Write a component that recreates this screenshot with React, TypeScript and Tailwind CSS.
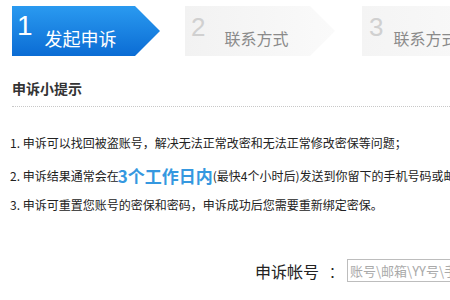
const font = "font-['Noto_Sans_CJK_SC',sans-serif]";
const num = "font-['Liberation_Sans',Arial,sans-serif]";

type Step = { n: string; label: string };

const steps: Step[] = [
  { n: "1", label: "发起申诉" },
  { n: "2", label: "联系方式" },
  { n: "3", label: "联系方式" },
];

const App = () => {
  return (
    <div className={`w-[450px] h-[300px] overflow-hidden bg-white ${font}`}>
      {/* 步骤条 */}
      <div className="flex pl-[12px] pt-[6px] h-[56px]">
        <div className="w-[148px] h-[50px] shrink-0 bg-gradient-to-b from-[#2a9af0] to-[#0b6cd4] [clip-path:polygon(0_0,123px_0,148px_50%,123px_100%,0_100%)] flex">
          <span className={`${num} text-[28px] leading-none text-white ml-[5px] mt-[6px]`}>
            {steps[0].n}
          </span>
          <span className="text-[18px] leading-none text-white ml-[12px] mt-[23px] whitespace-nowrap">
            {steps[0].label}
          </span>
        </div>
        <div className="w-[150px] h-[50px] shrink-0 ml-[25px] bg-gradient-to-r from-[#f2f2f2] to-[#fafafa] [clip-path:polygon(0_0,125px_0,150px_50%,125px_100%,0_100%)] flex">
          <span className={`${num} text-[26px] leading-none text-[#d0d0d0] ml-[6px] mt-[8px]`}>
            {steps[1].n}
          </span>
          <span className="text-[16px] leading-none text-[#8a8a8a] ml-[19px] mt-[24px] whitespace-nowrap">
            {steps[1].label}
          </span>
        </div>
        <div className="w-[150px] h-[50px] shrink-0 ml-[27px] bg-gradient-to-r from-[#f4f4f4] to-[#fafafa] flex">
          <span className={`${num} text-[26px] leading-none text-[#d0d0d0] ml-[7px] mt-[8px]`}>
            {steps[2].n}
          </span>
          <span className="text-[16px] leading-none text-[#8a8a8a] ml-[10px] mt-[24px] whitespace-nowrap">
            {steps[2].label}
          </span>
        </div>
      </div>

      {/* 提示 */}
      <div className="ml-[12px] mt-[23px] border-b border-dotted border-[#c8c8c8] pb-[9px]">
        <h2 className="text-[14px] leading-[18px] font-bold text-[#333]">申诉小提示</h2>
      </div>

      <div className="ml-[10px] text-[12px] text-[#222] whitespace-nowrap">
        <p className="mt-[28px] leading-[16px]">1. 申诉可以找回被盗账号，解决无法正常改密和无法正常修改密保等问题；</p>
        <p className="mt-[13px] leading-[24px] flex items-center">
          2. 申诉结果通常会在
          <span className="text-[17px] font-bold text-[#3598e0] ml-[-1px]">3个工作日内</span>
          (最快4个小时后)发送到你留下的手机号码或邮箱
        </p>
        <p className="mt-[9px] leading-[16px]">3. 申诉可重置您账号的密保和密码，申诉成功后您需要重新绑定密保。</p>
      </div>

      {/* 表单 */}
      <div className="flex items-center mt-[46px] pl-[255px] whitespace-nowrap">
        <span className="text-[16px] leading-none text-[#222] shrink-0">申诉帐号</span>
        <span className="text-[14px] leading-none text-[#222] ml-[10px] shrink-0">：</span>
        <input
          className="ml-[4px] w-[200px] h-[23px] border border-[#bdbdbd] px-[2px] text-[13px] placeholder:text-[#aaa] outline-none shrink-0"
          placeholder="账号\邮箱\YY号\手机号"
        />
      </div>
    </div>
  );
};

export default App;
